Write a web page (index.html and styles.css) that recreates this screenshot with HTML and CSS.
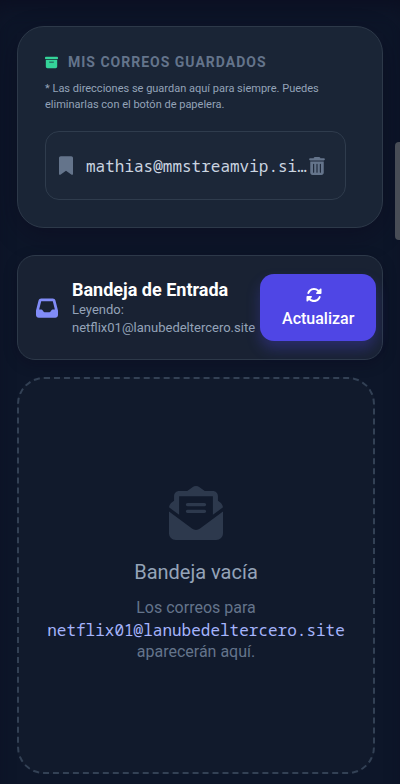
FILE: index.html
```html
<!DOCTYPE html>
<html lang="es">
<head>
<meta charset="utf-8">
<meta name="viewport" content="width=device-width, initial-scale=1">
<title>Bandeja de Entrada</title>
<link rel="stylesheet" href="styles.css">
</head>
<body>
<main class="page">
  <section class="card saved">
    <h2 class="saved-title">
      <svg class="icon-archive" viewBox="0 0 512 512" aria-hidden="true"><path d="M32 32H480c17.700 0 32 14.300 32 32V96c0 17.700-14.300 32-32 32H32C14.300 128 0 113.700 0 96V64C0 46.300 14.300 32 32 32zm0 128H480V416c0 35.300-28.700 64-64 64H96c-35.300 0-64-28.700-64-64V160zm128 80c0 8.800 7.200 16 16 16H336c8.800 0 16-7.200 16-16s-7.200-16-16-16H176c-8.800 0-16 7.200-16 16z"/></svg>
      MIS CORREOS GUARDADOS
    </h2>
    <p class="saved-note">* Las direcciones se guardan aquí para siempre. Puedes eliminarlas con el botón de papelera.</p>
    <ul class="saved-list">
      <li class="saved-item">
        <svg class="icon-bookmark" viewBox="0 0 384 512" aria-hidden="true"><path d="M0 48V487.700C0 501.100 10.900 512 24.300 512c5 0 9.900-1.500 14-4.400L192 400 345.700 507.600c4.100 2.900 9 4.400 14 4.400c13.400 0 24.300-10.900 24.300-24.300V48c0-26.500-21.500-48-48-48H48C21.500 0 0 21.500 0 48z"/></svg>
        <span class="address">mathias@mmstreamvip.site</span>
        <button class="delete" type="button" aria-label="Eliminar">
          <svg class="icon-trash" viewBox="0 0 448 512" aria-hidden="true"><path d="M135.200 17.700C140.600 6.800 151.700 0 163.800 0H284.200c12.100 0 23.200 6.800 28.600 17.700L320 32h96c17.700 0 32 14.300 32 32s-14.300 32-32 32H32C14.300 96 0 81.700 0 64S14.300 32 32 32h96l7.200-14.300zM32 128H416V448c0 35.300-28.700 64-64 64H96c-35.300 0-64-28.700-64-64V128zm96 64c-8.800 0-16 7.200-16 16V432c0 8.800 7.200 16 16 16s16-7.200 16-16V208c0-8.800-7.200-16-16-16zm96 0c-8.800 0-16 7.200-16 16V432c0 8.800 7.200 16 16 16s16-7.200 16-16V208c0-8.800-7.200-16-16-16zm96 0c-8.800 0-16 7.200-16 16V432c0 8.800 7.200 16 16 16s16-7.200 16-16V208c0-8.800-7.200-16-16-16z"/></svg>
        </button>
      </li>
    </ul>
  </section>

  <header class="card inbox">
    <div class="inbox-info">
      <svg class="icon-inbox" viewBox="0 0 512 512" aria-hidden="true"><path d="M121 32C91.600 32 66 52 58.900 80.500L1.900 308.400C.6 313.500 0 318.700 0 323.900V416c0 35.300 28.700 64 64 64H448c35.300 0 64-28.700 64-64V323.900c0-5.200-.6-10.400-1.900-15.500l-57-227.900C446 52 420.400 32 391 32H121zm0 64H391l48 192H387.800c-12.100 0-23.200 6.800-28.600 17.700l-14.300 28.600c-5.400 10.800-16.500 17.700-28.600 17.700H195.800c-12.100 0-23.200-6.800-28.600-17.700l-14.300-28.600c-5.400-10.800-16.500-17.700-28.600-17.700H73L121 96z"/></svg>
      <div class="inbox-text">
        <h1 class="inbox-title">Bandeja de Entrada</h1>
        <p class="inbox-reading">Leyendo: netflix01@lanubedeltercero.site</p>
      </div>
    </div>
    <button class="refresh" type="button">
      <svg class="icon-rotate" viewBox="0 0 512 512" aria-hidden="true"><path d="M142.900 142.900c62.200-62.200 162.700-62.500 225.300-1L327 183c-6.900 6.900-8.900 17.200-5.200 26.200s12.500 14.800 22.200 14.800H472c13.300 0 24-10.700 24-24V72c0-9.700-5.800-18.500-14.800-22.200s-19.300-1.700-26.200 5.200L413.400 96.600c-87.600-86.500-228.700-86.200-315.800 1C73.200 122 55.600 150.700 44.800 181.400c-5.900 16.700 2.900 34.900 19.500 40.800s34.900-2.900 40.800-19.500c7.700-21.800 20.200-42.300 37.800-59.800zM16 312V440c0 9.700 5.800 18.500 14.800 22.200s19.300 1.700 26.200-5.200l41.600-41.600c87.600 86.500 228.700 86.200 315.800-1c24.400-24.400 42.100-53.100 52.900-83.700c5.900-16.700-2.900-34.900-19.500-40.800s-34.900 2.900-40.800 19.500c-7.700 21.800-20.200 42.300-37.800 59.800c-62.200 62.200-162.700 62.500-225.300 1L185 329c6.900-6.900 8.900-17.200 5.200-26.200s-12.500-14.800-22.200-14.800H40c-13.300 0-24 10.700-24 24z"/></svg>
      Actualizar
    </button>
  </header>

  <section class="empty">
    <svg class="icon-envelope" viewBox="0 0 512 512" aria-hidden="true"><path d="M215.400 96H96V273.400L.2 202.500c1.600-18.100 10.900-34.900 25.700-45.800L48 140.300V96c0-26.500 21.500-48 48-48h76.600l49.900-36.900C232.200 3.900 243.900 0 256 0s23.800 3.900 33.500 11L339.400 48H416c26.500 0 48 21.500 48 48v44.300l22.100 16.400c14.800 10.900 24.100 27.700 25.700 45.800L416 273.400V96H215.400zM0 448V242.100L217.600 403.300c11.100 8.200 24.600 12.700 38.400 12.700s27.300-4.400 38.400-12.700L512 242.100V448c0 35.300-28.700 64-64 64H64c-35.300 0-64-28.700-64-64zM176 160H336c8.800 0 16 7.200 16 16s-7.200 16-16 16H176c-8.800 0-16-7.200-16-16s7.200-16 16-16zm0 64H336c8.800 0 16 7.200 16 16s-7.200 16-16 16H176c-8.800 0-16-7.200-16-16s7.200-16 16-16z"/></svg>
    <h2 class="empty-title">Bandeja vacía</h2>
    <p class="empty-text">Los correos para <span class="empty-address">netflix01@lanubedeltercero.site</span> aparecerán aquí.</p>
  </section>
</main>
<div class="scroll-thumb"></div>
</body>
</html>
```

FILE: styles.css
```css
* {
  box-sizing: border-box;
}

body {
  margin: 0;
  min-height: 100vh;
  background: #0d1629;
  color: #94a3b8;
  font-family: Roboto, "Liberation Sans", sans-serif;
  font-size: 16px;
  box-shadow: inset 0 16px 24px -12px #0b0d20;
}

h1, h2, p, ul {
  margin: 0;
  padding: 0;
}

svg {
  display: block;
  flex: none;
  fill: currentColor;
}

button {
  border: 0;
  font: inherit;
  cursor: pointer;
}

.page {
  display: flex;
  flex-direction: column;
  min-height: 100vh;
  padding: 26px 17px 10px;
}

.card {
  border: 1px solid #2d3949;
}

.saved {
  padding: 26px 36px 27px 27px;
  border-radius: 27px;
  background: #1a2536;
  box-shadow: 0 8px 24px rgba(12, 8, 28, 0.4);
}

.saved-title {
  display: flex;
  align-items: center;
  gap: 10px;
  color: #64748b;
  font-size: 14px;
  font-weight: 700;
  line-height: 18px;
  letter-spacing: 1px;
}

.icon-archive {
  width: 13px;
  height: 13px;
  color: #34d399;
}

.saved-note {
  margin-top: 10px;
  font-size: 11px;
  line-height: 16px;
}

.saved-list {
  margin-top: 18px;
  list-style: none;
}

.saved-item {
  display: flex;
  align-items: center;
  height: 69px;
  padding: 0 20px 0 13px;
  border: 1px solid #2f3c4d;
  border-radius: 14px;
  background: #1c2738;
  color: #64748b;
}

.icon-bookmark {
  width: 14px;
  height: 19px;
}

.address {
  flex: 1;
  min-width: 0;
  margin-left: 13px;
  overflow: hidden;
  color: #cbd5e1;
  font-family: "Noto Sans Mono", "DejaVu Sans Mono", monospace;
  font-size: 16px;
  line-height: 24px;
  text-overflow: ellipsis;
  white-space: nowrap;
}

.delete {
  padding: 8px 0;
  background: none;
  color: inherit;
}

.icon-trash {
  width: 16px;
  height: 18px;
}

.inbox {
  display: flex;
  align-items: center;
  justify-content: space-between;
  gap: 5px;
  margin-top: 27px;
  padding: 18px;
  border-radius: 18px;
  background: #192233;
  box-shadow: 0 4px 14px rgba(12, 8, 28, 0.3);
}

.inbox-info {
  display: flex;
  align-items: center;
  gap: 14px;
}

.icon-inbox {
  width: 22px;
  height: 22px;
  color: #818cf8;
}

.inbox-title {
  color: #ffffff;
  font-size: 18px;
  font-weight: 700;
  line-height: 22px;
}

.inbox-reading {
  font-size: 13px;
  line-height: 18px;
}

.refresh {
  display: flex;
  flex: none;
  flex-direction: column;
  align-items: center;
  gap: 5px;
  padding: 13px 22px 12px;
  border-radius: 14px;
  background: #4f46e5;
  box-shadow: 0 8px 14px rgba(79, 70, 229, 0.3);
  color: #ffffff;
  font-weight: 500;
  line-height: 21px;
}

.icon-rotate {
  width: 16px;
  height: 16px;
  margin-right: 9px;
}

.empty {
  display: flex;
  flex: 1;
  flex-direction: column;
  align-items: center;
  justify-content: center;
  margin: 17px 8px 0 0;
  padding: 20px 20px 22px;
  border: 2px dashed #334155;
  border-radius: 27px;
  background: #111a2c;
  text-align: center;
}

.icon-envelope {
  width: 54px;
  height: 54px;
  color: #2d394d;
}

.empty-title {
  margin-top: 19px;
  font-size: 20px;
  font-weight: 400;
  line-height: 26px;
}

.empty-text {
  margin-top: 12px;
  color: #64748b;
  line-height: 22px;
}

.empty-address {
  display: block;
  color: #a5b4fc;
  font-family: "Noto Sans Mono", "DejaVu Sans Mono", monospace;
}

.scroll-thumb {
  position: absolute;
  top: 142px;
  right: 0;
  width: 5px;
  height: 98px;
  border-radius: 4px 0 0 4px;
  background: #484d56;
}
```
